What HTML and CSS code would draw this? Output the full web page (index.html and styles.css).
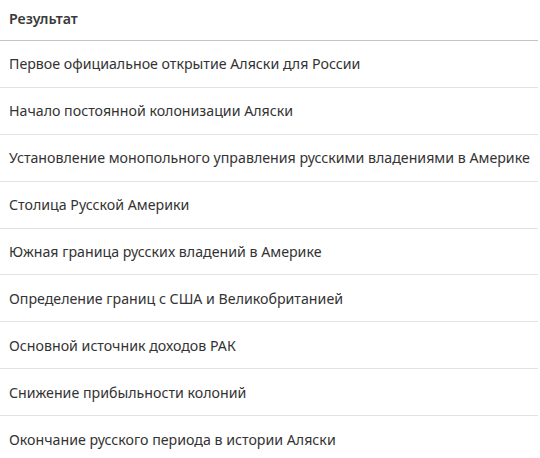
FILE: index.html
```html
<!DOCTYPE html>
<html lang="ru">
<head>
<meta charset="utf-8">
<link rel="stylesheet" href="styles.css">
</head>
<body>
<div class="table">
  <div class="head">Результат</div>
  <div class="row">Первое официальное открытие Аляски для России</div>
  <div class="row">Начало постоянной колонизации Аляски</div>
  <div class="row">Установление монопольного управления русскими владениями в Америке</div>
  <div class="row">Столица Русской Америки</div>
  <div class="row">Южная граница русских владений в Америке</div>
  <div class="row">Определение границ с США и Великобританией</div>
  <div class="row">Основной источник доходов РАК</div>
  <div class="row">Снижение прибыльности колоний</div>
  <div class="row">Окончание русского периода в истории Аляски</div>
</div>
</body>
</html>
```
FILE: styles.css
```css
html, body {
  margin: 0;
  padding: 0;
  background: #ffffff;
}
.table {
  width: 538px;
  display: flex;
  flex-direction: column;
  font-family: "Noto Sans", "Open Sans", sans-serif;
  font-size: 14.2px;
  color: #333333;
  white-space: nowrap;
}
.head {
  box-sizing: border-box;
  height: 41px;
  padding: 0 9px 3px;
  display: flex;
  align-items: center;
  font-weight: 600;
  color: #3a3a3a;
  border-bottom: 1px solid #c4c4c4;
}
.row {
  box-sizing: border-box;
  height: 46.9px;
  padding: 0 9px;
  display: flex;
  align-items: center;
  border-bottom: 1px solid #e2e2e2;
}
.row:last-child {
  border-bottom: none;
}
```
